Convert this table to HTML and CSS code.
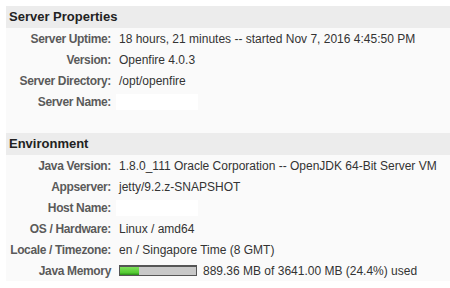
FILE: index.html
```html
<!DOCTYPE html>
<html>
<head>
<meta charset="utf-8">
<link rel="stylesheet" href="styles.css">
</head>
<body>
<div class="page">
  <div class="section-head">Server Properties</div>
  <div class="props">
    <div class="label">Server Uptime:</div><div class="value">18 hours, 21 minutes -- started Nov 7, 2016 4:45:50 PM</div>
    <div class="label">Version:</div><div class="value">Openfire 4.0.3</div>
    <div class="label">Server Directory:</div><div class="value">/opt/openfire</div>
    <div class="label">Server Name:</div><div class="value"><span class="blank"></span></div>
    <div class="spacer"></div>
  </div>
  <div class="section-head">Environment</div>
  <div class="props">
    <div class="label">Java Version:</div><div class="value">1.8.0_111 Oracle Corporation -- OpenJDK 64-Bit Server VM</div>
    <div class="label">Appserver:</div><div class="value">jetty/9.2.z-SNAPSHOT</div>
    <div class="label">Host Name:</div><div class="value"><span class="blank"></span></div>
    <div class="label">OS / Hardware:</div><div class="value">Linux / amd64</div>
    <div class="label">Locale / Timezone:</div><div class="value">en / Singapore Time (8 GMT)</div>
    <div class="label">Java Memory</div><div class="value mem"><span class="bar"><span class="fill" style="width:24.4%"></span></span><span>889.36 MB of 3641.00 MB (24.4%) used</span></div>
  </div>
</div>
</body>
</html>
```
FILE: styles.css
```css
html, body {
  margin: 0;
  padding: 0;
  background: #ffffff;
}
.page {
  padding: 6px 0 0 6px;
  font-family: "Liberation Sans", Arial, sans-serif;
  background: #ffffff;
}
.section-head {
  height: 22px;
  line-height: 22px;
  padding-left: 3px;
  background: #ececec;
  font-weight: bold;
  font-size: 13px;
  color: #222222;
}
.props {
  background: #fafafa;
  display: grid;
  grid-template-columns: 105px 1fr;
  grid-auto-rows: 21px;
  align-items: center;
}
.label {
  text-align: right;
  font-weight: bold;
  font-size: 12px;
  letter-spacing: -0.35px;
  color: #5a5a5a;
}
.value {
  padding-left: 8px;
  font-size: 12px;
  color: #333333;
  white-space: nowrap;
}
.blank {
  display: block;
  margin-left: -3px;
  width: 82px;
  height: 16px;
  background: #ffffff;
}
.spacer {
  grid-column: 1 / 3;
}
.mem {
  display: flex;
  align-items: center;
  gap: 6px;
}
.bar {
  display: block;
  width: 76px;
  height: 8px;
  border: 1px solid #555555;
  border-top-width: 2px;
  background: #c8c8c8;
}
.fill {
  display: block;
  height: 100%;
  background: linear-gradient(#7ee05a, #55cc33 70%, #2a8a1a);
}
```
